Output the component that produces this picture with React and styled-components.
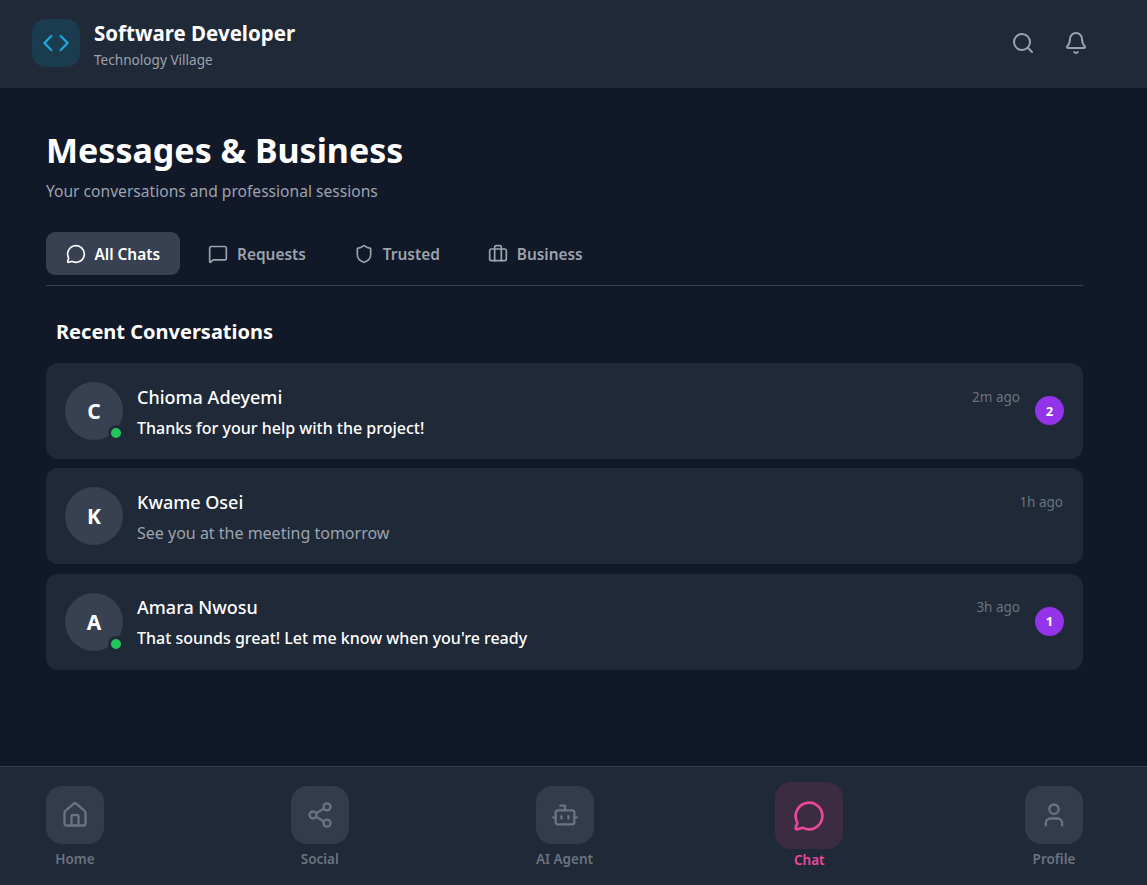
import React from 'react'
import styled, { createGlobalStyle } from 'styled-components'
import {
  Bell,
  Bot,
  Briefcase,
  Code,
  House,
  MessageCircle,
  MessageSquare,
  Search,
  Share2,
  Shield,
  User
} from 'lucide-react'

const tabs = [
  { label: 'All Chats', icon: MessageCircle, active: true },
  { label: 'Requests', icon: MessageSquare },
  { label: 'Trusted', icon: Shield },
  { label: 'Business', icon: Briefcase }
]

const chats = [
  { name: 'Chioma Adeyemi', message: 'Thanks for your help with the project!', time: '2m ago', unread: 2, online: true },
  { name: 'Kwame Osei', message: 'See you at the meeting tomorrow', time: '1h ago', unread: 0, online: false },
  { name: 'Amara Nwosu', message: "That sounds great! Let me know when you're ready", time: '3h ago', unread: 1, online: true }
]

const navItems = [
  { label: 'Home', icon: House },
  { label: 'Social', icon: Share2 },
  { label: 'AI Agent', icon: Bot },
  { label: 'Chat', icon: MessageCircle, active: true },
  { label: 'Profile', icon: User }
]

const App = () => (
  <Page>
    <GlobalStyle />
    <Header>
      <Brand>
        <Logo>
          <Code size={28} strokeWidth={2} />
        </Logo>
        <BrandText>
          <BrandTitle>Software Developer</BrandTitle>
          <BrandSub>Technology Village</BrandSub>
        </BrandText>
      </Brand>
      <HeaderActions>
        <Search size={24} strokeWidth={2} />
        <Bell size={24} strokeWidth={2} />
      </HeaderActions>
    </Header>

    <Main>
      <Title>Messages &amp; Business</Title>
      <Subtitle>Your conversations and professional sessions</Subtitle>

      <Tabs>
        {tabs.map(({ label, icon: Icon, active }) => (
          <Tab key={label} $active={active}>
            <Icon size={20} strokeWidth={2} />
            <TabLabel>{label}</TabLabel>
          </Tab>
        ))}
      </Tabs>

      <SectionTitle>Recent Conversations</SectionTitle>

      <ChatList>
        {chats.map((chat) => (
          <ChatCard key={chat.name}>
            <Avatar>
              {chat.name[0]}
              {chat.online && <OnlineDot />}
            </Avatar>
            <ChatBody>
              <ChatTop>
                <ChatName>{chat.name}</ChatName>
                <ChatTime>{chat.time}</ChatTime>
              </ChatTop>
              <ChatMessage $unread={chat.unread > 0}>{chat.message}</ChatMessage>
            </ChatBody>
            {chat.unread > 0 && <Badge>{chat.unread}</Badge>}
          </ChatCard>
        ))}
      </ChatList>
    </Main>

    <BottomNav>
      {navItems.map(({ label, icon: Icon, active }) => (
        <NavItem key={label} $active={active}>
          <NavIcon $active={active}>
            <Icon size={active ? 32 : 28} strokeWidth={2} />
          </NavIcon>
          {label}
        </NavItem>
      ))}
    </BottomNav>
  </Page>
)

const GlobalStyle = createGlobalStyle`
  html, body {
    margin: 0;
    padding: 0;
    background: #111827;
  }
  * {
    box-sizing: border-box;
  }
`

const Page = styled.div`
  display: flex;
  flex-direction: column;
  height: 885px;
  overflow: hidden;
  background: #111827;
  color: #fff;
  font-family: "Noto Sans", "Open Sans", sans-serif;
`

const Header = styled.header`
  display: flex;
  align-items: center;
  justify-content: space-between;
  flex: none;
  height: 88px;
  padding: 0 59px 2px 32px;
  background: #1f2937;
`

const Brand = styled.div`
  display: flex;
  align-items: center;
  gap: 14px;
`

const Logo = styled.div`
  display: flex;
  align-items: center;
  justify-content: center;
  width: 48px;
  height: 48px;
  border-radius: 14px;
  background: #1b3c4f;
  color: #1ea7dc;
`

const BrandText = styled.div`
  padding-top: 2px;
`

const BrandTitle = styled.div`
  font-size: 20.5px;
  font-weight: 700;
  line-height: 28px;
`

const BrandSub = styled.div`
  margin-top: 4px;
  font-size: 13.6px;
  line-height: 18px;
  color: #9ca3af;
`

const HeaderActions = styled.div`
  display: flex;
  align-items: center;
  gap: 29px;
  color: #9ca3af;
`

const Main = styled.main`
  flex: 1;
  padding: 38px 64px 0 46px;
`

const Title = styled.h1`
  margin: 0;
  font-size: 34px;
  font-weight: 700;
  line-height: 48px;
`

const Subtitle = styled.p`
  margin: 5px 0 0;
  font-size: 15.6px;
  line-height: 24px;
  color: #9ca3af;
`

const Tabs = styled.div`
  display: flex;
  gap: 9px;
  margin-top: 29px;
  padding-bottom: 10px;
  border-bottom: 1px solid #374151;
`

const Tab = styled.div`
  display: flex;
  align-items: center;
  gap: 9px;
  height: 43px;
  padding: 0 19.5px;
  border-radius: 9px;
  font-size: 15.4px;
  font-weight: 600;
  background: ${(props) => (props.$active ? '#374151' : 'transparent')};
  color: ${(props) => (props.$active ? '#fff' : '#9ca3af')};
`

const TabLabel = styled.span`
  padding-top: 2px;
`

const SectionTitle = styled.h2`
  margin: 30px 0 0 10px;
  font-size: 20px;
  font-weight: 700;
  line-height: 32px;
`

const ChatList = styled.div`
  display: flex;
  flex-direction: column;
  gap: 9.4px;
  margin-top: 15px;
`

const ChatCard = styled.div`
  display: flex;
  align-items: center;
  gap: 14px;
  height: 96px;
  padding: 0 19px;
  border-radius: 12px;
  background: #1f2937;
`

const Avatar = styled.div`
  position: relative;
  display: flex;
  flex: none;
  align-items: center;
  justify-content: center;
  width: 58px;
  height: 58px;
  border-radius: 50%;
  background: #374151;
  font-size: 21px;
  font-weight: 700;
`

const OnlineDot = styled.span`
  position: absolute;
  right: -1px;
  bottom: -1px;
  width: 16px;
  height: 16px;
  border: 3px solid #1f2937;
  border-radius: 50%;
  background: #22c55e;
`

const ChatBody = styled.div`
  flex: 1;
  min-width: 0;
`

const ChatTop = styled.div`
  display: flex;
  align-items: center;
  justify-content: space-between;
`

const ChatName = styled.div`
  font-size: 18px;
  font-weight: 500;
  line-height: 28px;
`

const ChatTime = styled.div`
  margin-right: 1px;
  font-size: 13.5px;
  line-height: 20px;
  color: #6b7280;
`

const ChatMessage = styled.div`
  margin-top: 5px;
  font-size: 16px;
  line-height: 24px;
  font-weight: ${(props) => (props.$unread ? 500 : 400)};
  color: ${(props) => (props.$unread ? '#fff' : '#9ca3af')};
`

const Badge = styled.div`
  display: flex;
  flex: none;
  align-items: center;
  justify-content: center;
  width: 29px;
  height: 29px;
  margin-bottom: 1px;
  border-radius: 50%;
  background: #9333ea;
  font-size: 13px;
  font-weight: 700;
`

const BottomNav = styled.nav`
  display: flex;
  flex: none;
  align-items: flex-start;
  justify-content: space-between;
  height: 119px;
  padding: 15px 64px 0 46px;
  border-top: 1px solid #374151;
  background: #1f2937;
`

const NavItem = styled.div`
  display: flex;
  flex-direction: column;
  align-items: center;
  gap: ${(props) => (props.$active ? '2px' : '6px')};
  width: 58px;
  padding-top: ${(props) => (props.$active ? '0' : '4px')};
  font-size: 13.5px;
  font-weight: 600;
  line-height: 18px;
  white-space: nowrap;
  color: ${(props) => (props.$active ? '#ec4899' : '#6b7280')};
`

const NavIcon = styled.div`
  display: flex;
  flex: none;
  align-items: center;
  justify-content: center;
  width: ${(props) => (props.$active ? '68px' : '58px')};
  height: ${(props) => (props.$active ? '67px' : '58px')};
  border-radius: 16px;
  background: ${(props) => (props.$active ? '#3b2c42' : '#323c4b')};
`

export default App
